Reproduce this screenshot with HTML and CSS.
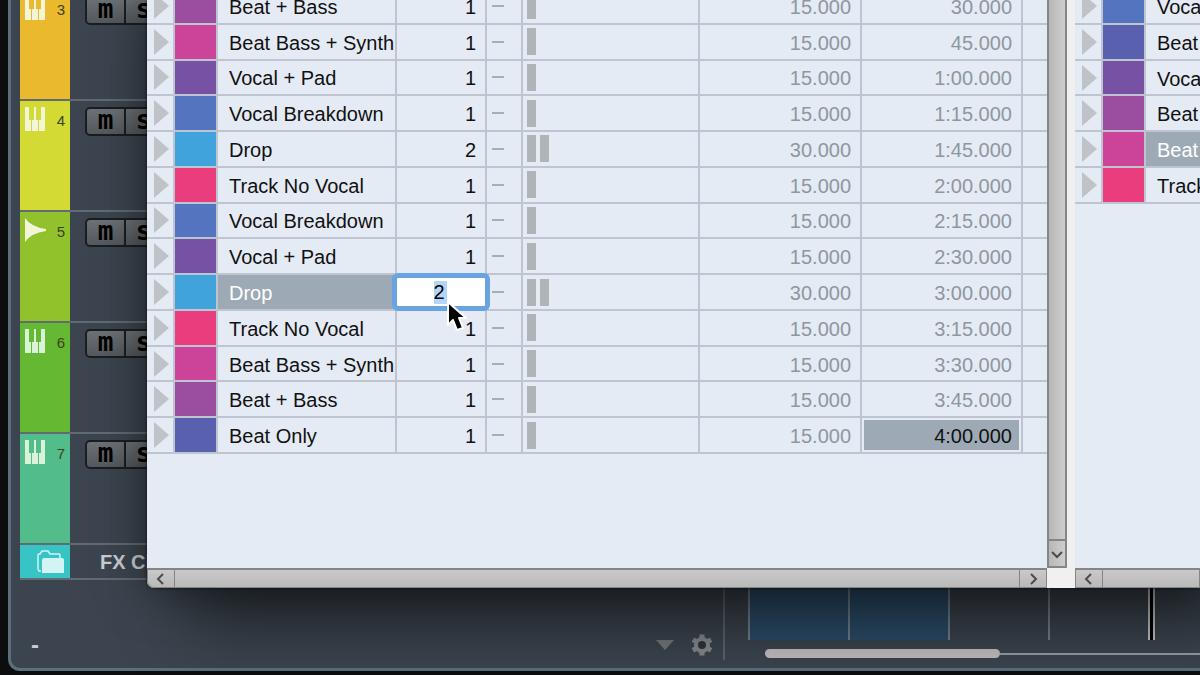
FILE: index.html
```html
<!DOCTYPE html>
<html lang="en">
<head>
<meta charset="utf-8">
<title>Arranger</title>
<link rel="stylesheet" href="styles.css">
</head>
<body>
<svg class="defs" aria-hidden="true">
  <symbol id="keys" viewBox="0 0 20 24"><path d="M0 0h4v13h2v11H0zM9 0h2v13h2v11H7V13h2zM16 0h4v24h-6V13h2z"/></symbol>
  <symbol id="play" viewBox="0 0 15 26"><path d="M0 0l15 13L0 26z"/></symbol>
  <symbol id="chev" viewBox="0 0 12 12"><path d="M8 1L3 6l5 5" fill="none" stroke="#4c4c4c" stroke-width="2"/></symbol>
</svg>
<main class="app">
  <ul class="tracks" id="tracks"></ul>
  <footer class="footer">
    <div class="status">
      <span class="minus">-</span>
      <button class="tool" aria-label="Options"><svg width="18" height="10" viewBox="0 0 18 10"><path d="M0 0h18L9 10z" fill="#747a80"/></svg></button>
      <button class="tool" aria-label="Settings"><svg width="20" height="22" viewBox="-10 -11 20 22"><g fill="#868b91"><rect x="-2.5" y="-10.5" width="5" height="21"/><rect x="-2.5" y="-10.5" width="5" height="21" transform="rotate(60)"/><rect x="-2.5" y="-10.5" width="5" height="21" transform="rotate(120)"/></g><circle r="6" fill="#30363c" stroke="#868b91" stroke-width="4"/></svg></button>
    </div>
    <div class="timeline">
      <div class="bars"><i class="on"></i><i class="on"></i><i></i><i></i><i class="end"></i></div>
      <div class="track-scroll"><span></span></div>
    </div>
  </footer>
</main>
<section class="dialog" aria-label="Arranger editor">
  <div class="pane">
    <div class="list">
      <table class="chain">
        <colgroup><col class="c-play"><col class="c-color"><col class="c-name"><col class="c-count"><col class="c-dash"><col><col class="c-len"><col class="c-end"><col class="c-rest"></colgroup>
        <tbody id="chain"></tbody>
      </table>
    </div>
    <div class="vbar"><button aria-label="Scroll down"><svg class="down" width="12" height="12"><use href="#chev"/></svg></button></div>
    <div class="hbar"><button aria-label="Scroll left"><svg width="12" height="12"><use href="#chev"/></svg></button><button aria-label="Scroll right"><svg class="right" width="12" height="12"><use href="#chev"/></svg></button></div>
  </div>
  <div class="pane side">
    <div class="list">
      <table class="parts">
        <colgroup><col class="c-play"><col class="c-color"><col></colgroup>
        <tbody id="parts"></tbody>
      </table>
    </div>
    <div class="hbar"><button aria-label="Scroll parts left"><svg width="12" height="12"><use href="#chev"/></svg></button></div>
  </div>
  <svg class="cursor" width="24" height="34" viewBox="-2 -2 24 34"><path d="M0 0v23l5-5 4 10 6-2-4-10h7z" stroke="#fff" stroke-width="2" stroke-linejoin="round"/></svg>
</section>
<script src="app.js"></script>
</body>
</html>
```
FILE: app.js
```js
const tracks = [[3, 'amber', 'keys'], [4, 'lime', 'keys'], [5, 'olive', 'wave'], [6, 'green', 'keys'], [7, 'mint', 'keys']];
const wave = '<svg width="21" height="24" viewBox="0 0 21 24"><path d="M0 0Q6 9 21 11v2Q6 15 0 24z"/></svg>';
const keys = '<svg width="20" height="24"><use href="#keys"/></svg>';
document.getElementById('tracks').innerHTML = tracks.map(([n, c, icon]) =>
  `<li class="track"><div class="tag ${c}">${icon === 'wave' ? wave : keys}<span>${n}</span></div>
  <div class="switches"><button aria-label="Mute track ${n}">m</button><button aria-label="Solo track ${n}">s</button></div></li>`).join('') +
  `<li class="track folder"><div class="tag aqua"><svg width="28" height="24" viewBox="0 0 28 24"><path d="M4 21H2q-1-1-1-3V5q0-1 1-1h1l2-3h6l2 3h9q1 0 1 1v3" fill="none" stroke="#d2f4f4" stroke-width="1.5"/><path d="M5 10q0-2 2-2h18q2 0 2 2v13H5z"/></svg></div><span class="folder-name">FX Channels</span></li>`;

const play = '<td class="play"><svg width="15" height="26"><use href="#play"/></svg></td>';
const rows = [
  ['Beat + Bass', 'plum', 1, '30.000'],
  ['Beat Bass + Synth', 'magenta', 1, '45.000'],
  ['Vocal + Pad', 'purple', 1, '1:00.000'],
  ['Vocal Breakdown', 'blue', 1, '1:15.000'],
  ['Drop', 'sky', 2, '1:45.000'],
  ['Track No Vocal', 'pink', 1, '2:00.000'],
  ['Vocal Breakdown', 'blue', 1, '2:15.000'],
  ['Vocal + Pad', 'purple', 1, '2:30.000'],
  ['Drop', 'sky', 2, '3:00.000', 'edit'],
  ['Track No Vocal', 'pink', 1, '3:15.000'],
  ['Beat Bass + Synth', 'magenta', 1, '3:30.000'],
  ['Beat + Bass', 'plum', 1, '3:45.000'],
  ['Beat Only', 'indigo', 1, '4:00.000', 'total']
];
document.getElementById('chain').innerHTML = rows.map(([name, c, n, end, state]) =>
  `<tr>${play}<td class="${c}"></td><td class="name${state === 'edit' ? ' selected' : ''}">${name}</td>` +
  (state === 'edit' ? '<td class="editing"><input type="text" value="2" aria-label="Repeats"></td>' : `<td class="num">${n}</td>`) +
  `<td class="dash"><i></i></td><td class="meter">${'<i></i>'.repeat(n)}</td><td class="num dim">${n * 15}.000</td>` +
  `<td class="num ${state === 'total' ? 'total' : 'dim'}">${end}</td><td class="rest"></td></tr>`).join('');

const parts = [['Vocal Breakdown', 'blue'], ['Beat Only', 'indigo'], ['Vocal + Pad', 'purple'], ['Beat + Bass', 'plum'], ['Beat Bass + Synth', 'magenta', 'selected'], ['Track No Vocal', 'pink']];
document.getElementById('parts').innerHTML = parts.map(([name, c, s]) =>
  `<tr>${play}<td class="${c}"></td><td class="name ${s || ''}">${name}</td></tr>`).join('');
```
FILE: styles.css
```css
* { box-sizing: border-box; }
body {
  margin: 0;
  height: 100vh;
  position: relative;
  overflow: hidden;
  background: #0c0d0e;
  font: 20px/24px "Liberation Sans", Arial, sans-serif;
  color: #111;
}
button { padding: 0; border: 0; background: none; font: inherit; color: inherit; }
svg { display: block; }
.defs { display: none; }

.app {
  height: calc(100vh - 4px);
  margin-left: 8px;
  display: flex;
  flex-direction: column;
  overflow: hidden;
  border: solid #5d6e7d;
  border-width: 0 0 3px 3px;
  border-bottom-left-radius: 12px;
  background: #3c454f;
}
.tracks { list-style: none; margin: -10px 0 0; padding: 0 0 0 9px; }
.track { display: flex; height: 111px; border-bottom: 2px solid #626b72; }
.tag {
  width: 50px;
  padding: 6px 5px;
  display: flex;
  justify-content: space-between;
  align-items: flex-start;
  fill: #f3f5d8;
  font-size: 15px;
  line-height: 28px;
  color: #3b4420;
}
.amber { background: #eab92d; }
.lime { background: #d3da34; }
.olive { background: #91c22b; }
.green { background: #64b832; }
.mint { background: #52bd8a; }
.aqua { background: #38c3c5; }
.green, .mint { fill: #d9f2d8; }
.switches { display: flex; align-self: flex-start; margin: 6px 0 0 15px; border: 2px solid #1a1e22; border-radius: 5px; background: linear-gradient(#6d7276, #54595e); }
.switches button { width: 37px; height: 25px; padding-bottom: 4px; font: bold 26px/20px "DejaVu Sans Mono", monospace; color: #000; }
.switches button + button { border-left: 2px solid #1a1e22; }
.folder { height: 35px; }
.folder .tag { justify-content: flex-end; align-items: center; fill: #d2f4f4; }
.folder-name { padding-left: 30px; font-weight: bold; line-height: 35px; color: #c9ced3; }

.footer { flex: 1; display: flex; }
.status { flex: 1; display: flex; align-items: center; gap: 18px; margin-bottom: 8px; padding: 50px 11px 0 20px; border-right: 2px solid #5d666e; }
.minus { flex: 1; font-size: 24px; font-weight: bold; color: #c9ced3; }
.timeline { width: 475px; padding-left: 23px; display: flex; flex-direction: column; }
.bars { height: 60px; display: flex; }
.bars i { flex: 0 0 100px; border-left: 2px solid #73838f; }
.bars .on { background: #2d4e6b; }
.bars .end { flex: 0 0 7px; border: solid #c4c8cc; border-width: 0 2px; background: #000; }
.track-scroll { margin: 9px 0 0 17px; height: 9px; display: flex; align-items: center; }
.track-scroll span { flex: 0 0 235px; height: 9px; border-radius: 5px; background: #c4bfc3; }
.track-scroll::after { content: ""; flex: 1; height: 2px; background: #999ea3; }

.dialog {
  position: absolute;
  inset: 0 0 87px 147px;
  display: flex;
  gap: 8px;
  background: #f0f0f0;
  border-bottom-left-radius: 7px;
  box-shadow: 40px 40px 70px rgba(0, 0, 0, .45), 0 0 50px rgba(0, 0, 0, .5), 0 0 3px #111;
}
.pane { flex: 1; min-width: 0; display: grid; grid-template: minmax(0, 1fr) 20px / minmax(0, 1fr) 20px; }
.side { flex: 0 0 125px; grid-template-columns: minmax(0, 1fr); }
.list { overflow: hidden; background: #e5ebf4; }
.vbar { display: flex; align-items: flex-end; border: solid #858585; border-width: 0 2px 2px; background: linear-gradient(90deg, #b7b7b7, #cecece); }
.vbar button { width: 100%; height: 27px; border-top: 2px solid #858585; }
.hbar { display: flex; justify-content: space-between; border: 1px solid #858585; border-top-width: 2px; background: linear-gradient(#c9c9c9, #b9b9b9); }
.pane:first-child .hbar { border-bottom-left-radius: 7px; }
.hbar button { width: 27px; border-right: 1px solid #858585; }
.hbar button + button { border-right: 0; border-left: 1px solid #858585; }
.vbar svg, .hbar svg { margin: auto; }
.down { transform: rotate(-90deg); }
.right { transform: rotate(180deg); }

table { width: 100%; margin-top: -11px; table-layout: fixed; border-spacing: 0; }
tr { height: 34px; }
.chain { height: 465px; }
.parts { height: 215px; }
.c-play { width: 28px; }
.c-color { width: 43px; }
.c-name { width: 179px; }
.c-count { width: 90px; }
.c-dash { width: 36px; }
.c-len { width: 162px; }
.c-end { width: 161px; }
.c-rest { width: 24px; }
td { padding: 0; border: solid #bfc5d0; border-width: 0 2px 2px 0; background-clip: padding-box; }
.rest, .parts .name { border-right: 0; }
.play { fill: #bfc3c8; padding-left: 7px; }
.name { padding: 2px 0 0 11px; white-space: nowrap; overflow: hidden; }
.selected { background-color: #9daab5; color: #fff; }
.num { padding: 2px 9px 0 0; text-align: right; }
.dim { color: #8e979f; }
.dash { padding-left: 5px; }
.dash i { display: block; width: 12px; height: 2px; background: #a6adb4; }
.meter { padding-left: 4px; font-size: 0; }
.meter i { display: inline-block; width: 9px; height: 27px; margin-right: 4px; background: #aeb4b8; vertical-align: middle; }
.total { background-color: #9daab5; box-shadow: inset 0 0 0 2px #e5ebf4; }
input {
  display: block;
  width: 100%;
  height: 28px;
  padding: 0 4px 0 0;
  border: 0;
  border-radius: 1px;
  outline: 5px solid #69a3e2;
  position: relative;
  text-align: center;
  font: inherit;
  background: #fff linear-gradient(#b3d5f8, #b3d5f8) 37px center / 13px 23px no-repeat;
}
.cursor { position: absolute; left: 299px; top: 300px; }

.plum { background-color: #9b4da0; }
.magenta { background-color: #cb4499; }
.purple { background-color: #7752a4; }
.blue { background-color: #5375bf; }
.sky { background-color: #41a3dc; }
.pink { background-color: #e93d7e; }
.indigo { background-color: #5961af; }
```
